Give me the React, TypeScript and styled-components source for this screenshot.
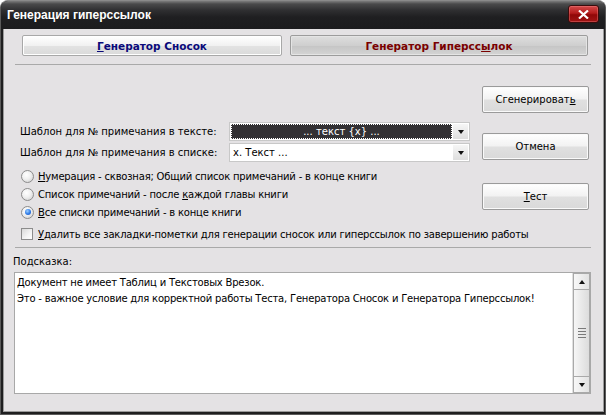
import React from "react";
import styled, { createGlobalStyle } from "styled-components";

const Global = createGlobalStyle`
  html, body { margin: 0; padding: 0; background: #ffffff; }
  body {
    width: 606px; height: 415px; overflow: hidden;
    font-family: "DejaVu Sans", "Liberation Sans", sans-serif;
    font-size: 10px; color: #000;
  }
`;

const Window = styled.div`
  width: 606px;
  height: 415px;
  display: flex;
  flex-direction: column;
  background: #1e1e1f;
  border-radius: 8px 8px 0 0;
  overflow: hidden;
  box-sizing: border-box;
  border: 1px solid #5a5a5a;
  border-top-color: #8a8a8a;
`;

const TitleBar = styled.div`
  height: 28px;
  flex: none;
  display: flex;
  align-items: center;
  justify-content: space-between;
  padding: 0 6px 0 6px;
  background: linear-gradient(#7c7c7c 0px, #4a4a4b 3px, #303032 9px, #1f1f21 16px, #1c1c1e 100%);
`;

const Title = styled.div`
  color: #ffffff;
  font-family: "Liberation Sans", sans-serif;
  font-weight: bold;
  font-size: 12px;
  margin-top: -1px;
`;

const CloseBtn = styled.div`
  width: 29px;
  height: 16px;
  border: 1px solid #3a0c0c;
  border-radius: 3px;
  background: linear-gradient(#d24a4a 0%, #b41c1c 45%, #900808 55%, #a01414 100%);
  box-shadow: inset 0 0 0 1px rgba(255, 150, 150, 0.35);
  display: flex;
  align-items: center;
  justify-content: center;
  margin-top: -2px;
`;

const Frame = styled.div`
  flex: 1;
  display: flex;
  padding: 0 2px 2px 2px;
  background: #1e1e1f;
`;

const Body = styled.div`
  flex: 1;
  display: flex;
  flex-direction: column;
  background: #e4e2e4;
  border: 1px solid #9a9a9a;
  border-top: none;
`;

const TabRow = styled.div`
  display: grid;
  grid-template-columns: 260px 1fr;
  column-gap: 8px;
  margin: 6px 15px 0 18px;
  height: 21px;
`;

const TabButton = styled.div<{ $active?: boolean }>`
  display: flex;
  align-items: center;
  justify-content: center;
  box-sizing: border-box;
  border: 1px solid ${(p) => (p.$active ? "#9c9c9c" : "#a8a8a8")};
  border-radius: 2px;
  font-weight: bold;
  font-size: 10.5px;
  color: ${(p) => (p.$active ? "#7a0000" : "#0a0a7a")};
  background: ${(p) =>
    p.$active
      ? "linear-gradient(#dedede 0%, #cfcfcf 50%, #c6c6c6 55%, #d4d4d4 100%)"
      : "linear-gradient(#ffffff 0%, #f1f1f1 50%, #e2e2e2 55%, #dadada 100%)"};
  box-shadow: inset 0 0 0 1px ${(p) => (p.$active ? "#e4e4e4" : "#ffffff")};
`;

const U = styled.span`
  text-decoration: underline;
  text-underline-offset: 1px;
`;

const Separator = styled.div<{ $top: number }>`
  height: 1px;
  background: #a9a9a9;
  margin: ${(p) => p.$top}px 12px 0 11px;
`;

const Main = styled.div`
  display: flex;
  margin: 0 14px 0 16px;
  height: 181px;
  column-gap: 12px;
`;

const LeftCol = styled.div`
  width: 450px;
  display: flex;
  flex-direction: column;
  padding-top: 57px;
`;

const RightCol = styled.div`
  width: 107px;
  display: flex;
  flex-direction: column;
  padding-top: 21px;
`;

const FieldGrid = styled.div`
  display: grid;
  grid-template-columns: 209px 241px;
  grid-auto-rows: 19px;
  row-gap: 2px;
  align-items: center;
`;

const FieldLabel = styled.div`
  white-space: nowrap;
`;

const Combo = styled.div`
  height: 19px;
  box-sizing: border-box;
  border: 1px solid #c8c8c8;
  background: #ffffff;
  display: flex;
  padding: 1px;
`;

const ComboValue = styled.div<{ $focused?: boolean }>`
  flex: 1;
  display: flex;
  align-items: center;
  justify-content: ${(p) => (p.$focused ? "center" : "flex-start")};
  padding: 0 2px;
  color: ${(p) => (p.$focused ? "#ffffff" : "#000")};
  background: ${(p) => (p.$focused ? "#333134" : "#ffffff")};
  outline: ${(p) => (p.$focused ? "1px dotted #ffffff" : "none")};
  outline-offset: -1px;
  white-space: nowrap;
`;

const ComboArrow = styled.div`
  width: 15px;
  margin-left: 1px;
  background: linear-gradient(#f6f6f6, #dedede);
  display: flex;
  align-items: center;
  justify-content: center;
`;

const Triangle = styled.div`
  width: 0;
  height: 0;
  border-left: 3.5px solid transparent;
  border-right: 3.5px solid transparent;
  border-top: 4px solid #111;
`;

const OptionList = styled.div`
  display: flex;
  flex-direction: column;
  margin-top: 5px;
  letter-spacing: -0.2px;
`;

const OptionRow = styled.div<{ $gapTop?: number }>`
  display: flex;
  align-items: center;
  height: 18px;
  margin-top: ${(p) => p.$gapTop ?? 0}px;
  white-space: nowrap;
`;

const Radio = styled.span<{ $checked?: boolean }>`
  flex: none;
  width: 13px;
  height: 13px;
  box-sizing: border-box;
  border-radius: 50%;
  border: 1px solid #8c8c8c;
  background: radial-gradient(circle at 40% 35%, #ffffff 0%, #f0f0f0 45%, #c9c9c9 100%);
  margin: 0 4px 0 1px;
  display: flex;
  align-items: center;
  justify-content: center;
  &::after {
    content: "";
    display: ${(p) => (p.$checked ? "block" : "none")};
    width: 6px;
    height: 6px;
    border-radius: 50%;
    background: radial-gradient(circle at 40% 35%, #9fd0ff 0%, #2d7ae8 55%, #1b4fb8 100%);
  }
`;

const Check = styled.span`
  flex: none;
  width: 12px;
  height: 12px;
  box-sizing: border-box;
  border: 1px solid #8c8c8c;
  background: linear-gradient(135deg, #d9d9d9 0%, #f4f4f4 60%, #ffffff 100%);
  margin: 0 5px 0 1px;
`;

const PushButton = styled.div<{ $gap?: number }>`
  height: 27px;
  box-sizing: border-box;
  margin-top: ${(p) => p.$gap ?? 0}px;
  border: 1px solid #9a9a9a;
  border-radius: 2px;
  background: linear-gradient(#ffffff 0%, #f2f2f2 48%, #e0e0e0 52%, #d9d9d9 100%);
  box-shadow: inset 0 0 0 1px #fafafa;
  display: flex;
  align-items: center;
  justify-content: center;
  white-space: nowrap;
`;

const HintLabel = styled.div`
  margin: 7px 0 0 9px;
  height: 14px;
  line-height: 14px;
`;

const HintBox = styled.div`
  margin: 3px 12px 0 10px;
  height: 122px;
  box-sizing: border-box;
  border: 1px solid #a8a8a8;
  background: #ffffff;
  display: flex;
`;

const HintText = styled.div`
  flex: 1;
  padding: 2px 0 0 2px;
  line-height: 16px;
  letter-spacing: -0.2px;
  white-space: nowrap;
  overflow: hidden;
`;

const ScrollBar = styled.div`
  width: 17px;
  display: flex;
  flex-direction: column;
  background: #ececec;
  border-left: 1px solid #e0e0e0;
`;

const ScrollBtn = styled.div`
  height: 17px;
  box-sizing: border-box;
  border: 1px solid #a9a9a9;
  background: linear-gradient(90deg, #f8f8f8, #e2e2e2);
  display: flex;
  align-items: center;
  justify-content: center;
`;

const ScrollThumb = styled.div`
  flex: 1;
  box-sizing: border-box;
  border: 1px solid #a9a9a9;
  border-top: none;
  border-bottom: none;
  background: linear-gradient(90deg, #f6f6f6, #dcdcdc);
  display: flex;
  flex-direction: column;
  align-items: center;
  justify-content: center;
  gap: 2px;
`;

const Grip = styled.div`
  width: 8px;
  height: 1px;
  background: #7a7a7a;
`;

const UpTri = styled.div`
  width: 0;
  height: 0;
  border-left: 3.5px solid transparent;
  border-right: 3.5px solid transparent;
  border-bottom: 4px solid #111;
`;

export default function App() {
  return (
    <>
      <Global />
      <Window>
        <TitleBar>
          <Title>Генерация гиперссылок</Title>
          <CloseBtn>
            <svg width="11" height="9" viewBox="0 0 11 9">
              <path d="M1 0.5 L10 8.5 M10 0.5 L1 8.5" stroke="#ffffff" strokeWidth="2.2" />
            </svg>
          </CloseBtn>
        </TitleBar>
        <Frame>
          <Body>
            <TabRow>
              <TabButton>
                <span>
                  <U>Г</U>енератор Сносок
                </span>
              </TabButton>
              <TabButton $active>
                <span>
                  Генератор Гиперсс<U>ы</U>лок
                </span>
              </TabButton>
            </TabRow>
            <Separator $top={8} />
            <Main>
              <LeftCol>
                <FieldGrid>
                  <FieldLabel>Шаблон для № примечания в тексте:</FieldLabel>
                  <Combo>
                    <ComboValue $focused>... текст {"{x}"} ...</ComboValue>
                    <ComboArrow>
                      <Triangle />
                    </ComboArrow>
                  </Combo>
                  <FieldLabel>Шаблон для № примечания в списке:</FieldLabel>
                  <Combo>
                    <ComboValue>x. Текст ...</ComboValue>
                    <ComboArrow>
                      <Triangle />
                    </ComboArrow>
                  </Combo>
                </FieldGrid>
                <OptionList>
                  <OptionRow>
                    <Radio />
                    <span>
                      <U>Н</U>умерация - сквозная; Общий список примечаний - в конце книги
                    </span>
                  </OptionRow>
                  <OptionRow>
                    <Radio />
                    <span>
                      Список примечаний - после <U>к</U>аждой главы книги
                    </span>
                  </OptionRow>
                  <OptionRow>
                    <Radio $checked />
                    <span>
                      <U>В</U>се списки примечаний - в конце книги
                    </span>
                  </OptionRow>
                  <OptionRow $gapTop={4}>
                    <Check />
                    <span>
                      <U>У</U>далить все закладки-пометки для генерации сносок или гиперссылок по завершению работы
                    </span>
                  </OptionRow>
                </OptionList>
              </LeftCol>
              <RightCol>
                <PushButton>
                  <span>
                    Сгенерироват<U>ь</U>
                  </span>
                </PushButton>
                <PushButton $gap={20}>Отмена</PushButton>
                <PushButton $gap={23}>
                  <span>
                    <U>Т</U>ест
                  </span>
                </PushButton>
              </RightCol>
            </Main>
            <Separator $top={1} />
            <HintLabel>Подсказка:</HintLabel>
            <HintBox>
              <HintText>
                Документ не имеет Таблиц и Текстовых Врезок.
                <br />
                Это - важное условие для корректной работы Теста, Генератора Сносок и Генератора Гиперссылок!
              </HintText>
              <ScrollBar>
                <ScrollBtn>
                  <UpTri />
                </ScrollBtn>
                <ScrollThumb>
                  <Grip />
                  <Grip />
                  <Grip />
                  <Grip />
                </ScrollThumb>
                <ScrollBtn>
                  <Triangle />
                </ScrollBtn>
              </ScrollBar>
            </HintBox>
          </Body>
        </Frame>
      </Window>
    </>
  );
}
